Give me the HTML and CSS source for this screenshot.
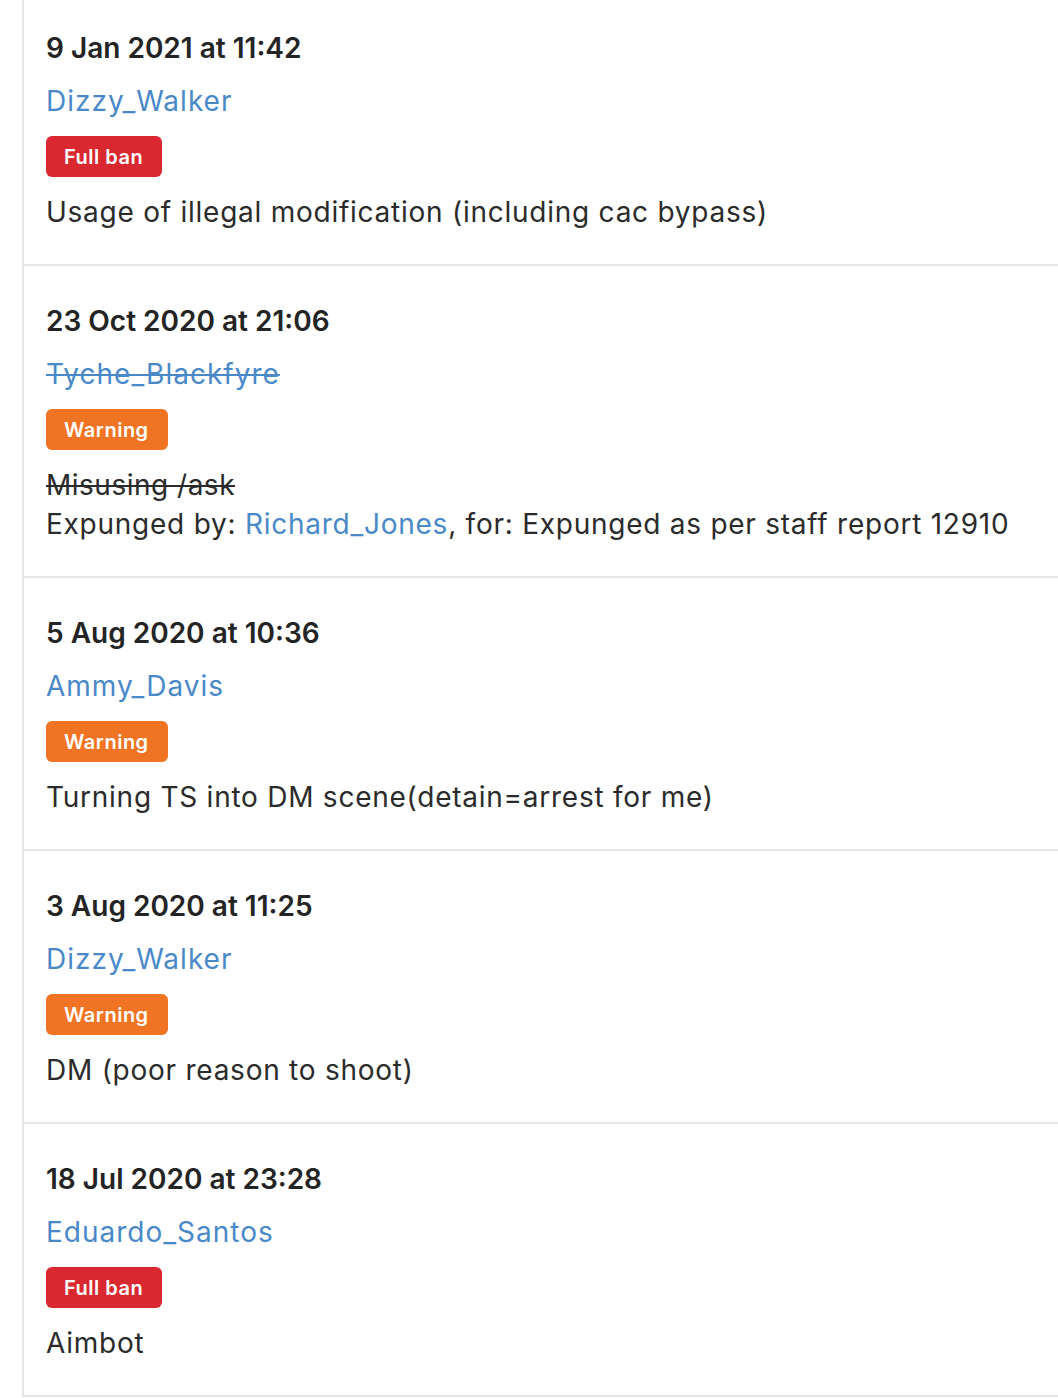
FILE: index.html
```html
<!DOCTYPE html>
<html lang="en">
<head>
<meta charset="utf-8">
<title>Punishments</title>
<link rel="stylesheet" href="styles.css">
</head>
<body>
<div class="list">
  <div class="entry">
    <div class="date">9 Jan 2021 at 11:42</div>
    <div class="name"><a class="user" href="#">Dizzy_Walker</a></div>
    <div class="badge-row"><span class="badge ban">Full ban</span></div>
    <div class="reason">Usage of illegal modification (including cac bypass)</div>
  </div>
  <div class="entry">
    <div class="date">23 Oct 2020 at 21:06</div>
    <div class="name"><a class="user struck" href="#">Tyche_Blackfyre</a></div>
    <div class="badge-row"><span class="badge warn">Warning</span></div>
    <div class="reason"><span class="struck">Misusing /ask</span></div>
    <div class="reason">Expunged by: <a class="user" href="#">Richard_Jones</a>, for: Expunged as per staff report 12910</div>
  </div>
  <div class="entry">
    <div class="date">5 Aug 2020 at 10:36</div>
    <div class="name"><a class="user" href="#">Ammy_Davis</a></div>
    <div class="badge-row"><span class="badge warn">Warning</span></div>
    <div class="reason">Turning TS into DM scene(detain=arrest for me)</div>
  </div>
  <div class="entry">
    <div class="date">3 Aug 2020 at 11:25</div>
    <div class="name"><a class="user" href="#">Dizzy_Walker</a></div>
    <div class="badge-row"><span class="badge warn">Warning</span></div>
    <div class="reason">DM (poor reason to shoot)</div>
  </div>
  <div class="entry">
    <div class="date">18 Jul 2020 at 23:28</div>
    <div class="name"><a class="user" href="#">Eduardo_Santos</a></div>
    <div class="badge-row"><span class="badge ban">Full ban</span></div>
    <div class="reason">Aimbot</div>
  </div>
</div>
</body>
</html>
```
FILE: styles.css
```css
html, body {
  margin: 0;
  padding: 0;
  background: #ffffff;
  overflow: hidden;
}
body {
  font-family: Inter, "DejaVu Sans", sans-serif;
  color: #2b2b2b;
}
.list {
  margin-top: -7px;
  margin-left: 22px;
  border-left: 2px solid #e5e5e5;
}
.entry {
  padding: 36px 0 32px 22px;
  border-bottom: 2px solid #e5e5e5;
}
.date {
  font-size: 28px;
  line-height: 39px;
  font-weight: 600;
  letter-spacing: 0;
  color: #242424;
  margin-bottom: 14px;
  white-space: nowrap;
}
.name {
  font-size: 28px;
  line-height: 39px;
  letter-spacing: 1px;
  margin-bottom: 15px;
  white-space: nowrap;
}
.user {
  color: #4a89c8;
  text-decoration: none;
}
.struck {
  text-decoration: line-through;
  text-decoration-thickness: 2px;
}
.badge-row {
  display: flex;
  margin-bottom: 16px;
}
.badge {
  display: inline-flex;
  align-items: center;
  height: 41px;
  padding: 0 19px 0 18px;
  border-radius: 6px;
  color: #ffffff;
  font-size: 20px;
  font-weight: 600;
  letter-spacing: 0.5px;
}
.ban {
  background: #d9282f;
}
.warn {
  background: #f07423;
}
.reason {
  font-size: 28px;
  line-height: 39px;
  letter-spacing: 0.75px;
  color: #2b2b2b;
  white-space: nowrap;
}
.reason .struck {
  letter-spacing: 0.5px;
}
```
